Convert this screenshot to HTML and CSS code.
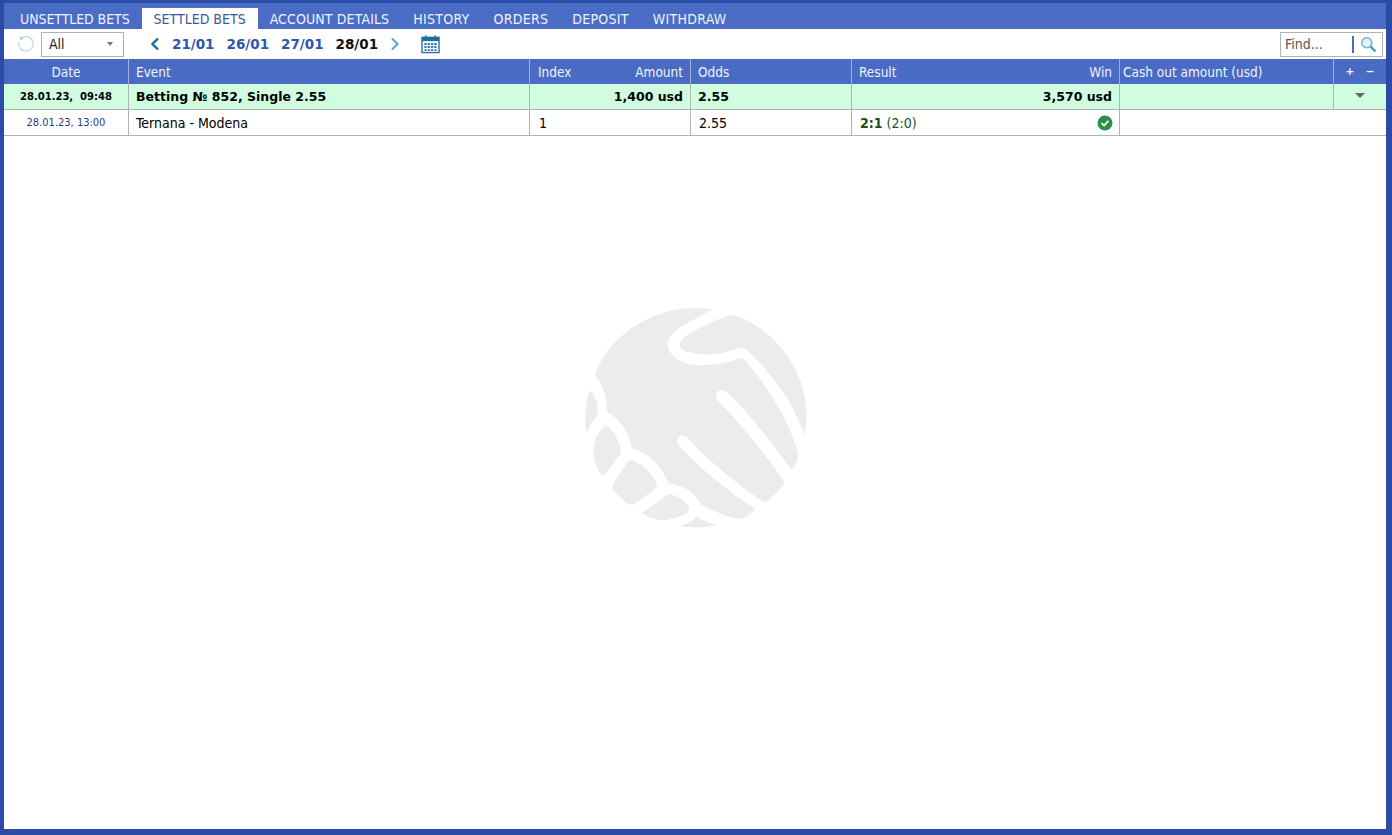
FILE: index.html
```html
<!DOCTYPE html>
<html lang="en">
<head>
<meta charset="utf-8">
<title>Settled bets</title>
<link rel="stylesheet" href="styles.css">
</head>
<body>
<div class="frame">
  <nav class="tabs">
    <a class="tab first">UNSETTLED BETS</a>
    <a class="tab active">SETTLED BETS</a>
    <a class="tab mid">ACCOUNT DETAILS</a>
    <a class="tab wide">HISTORY</a>
    <a class="tab wide">ORDERS</a>
    <a class="tab wide">DEPOSIT</a>
    <a class="tab wide">WITHDRAW</a>
  </nav>
  <div class="toolbar">
    <svg class="refresh" width="18" height="18" viewBox="0 0 18 18"><path d="M5.600 2.300A7.300 7.300 0 1 1 1.900 6.800" fill="none" stroke="#bcd9e8" stroke-width="1.300"/><path d="M2.400 1.600 6.800 2.200 3.800 5.800Z" fill="#a9cfe2"/></svg>
    <div class="select"><span>All</span><i class="caret"></i></div>
    <div class="dates">
      <svg class="chev" width="10" height="14" viewBox="0 0 10 14"><path d="M8 1.500 2.500 7 8 12.500" fill="none" stroke="#0f6d9e" stroke-width="2.400"/></svg>
      <a class="date">21/01</a>
      <a class="date">26/01</a>
      <a class="date">27/01</a>
      <a class="date current">28/01</a>
      <svg class="chev" width="10" height="14" viewBox="0 0 10 14"><path d="M2 1.500 7.500 7 2 12.500" fill="none" stroke="#62a8d0" stroke-width="2.200"/></svg>
    </div>
    <svg class="cal" width="19" height="20" viewBox="0 0 20 20"><rect x="1" y="3" width="18" height="16" fill="#fff" stroke="#1e6f9e" stroke-width="1.400"/><rect x="1" y="3" width="18" height="4" fill="#1e6f9e"/><path d="M5 1v4M15 1v4" stroke="#1e6f9e" stroke-width="1.800"/><path d="M3.500 9h2.400v2H3.500zM7 9h2.400v2H7zM10.500 9h2.400v2h-2.400zM14 9h2.400v2H14zM3.500 12.200h2.400v2H3.500zM7 12.200h2.400v2H7zM10.500 12.200h2.400v2h-2.400zM14 12.200h2.400v2H14zM3.500 15.400h2.400v2H3.500zM7 15.400h2.400v2H7zM10.500 15.400h2.400v2h-2.400zM14 15.400h2.400v2H14z" fill="#2b7fb2"/></svg>
    <div class="find">
      <span class="find-text">Find...</span>
      <i class="find-bar"></i>
      <svg width="17" height="17" viewBox="0 0 17 17"><circle cx="6.800" cy="6.800" r="5" fill="#e4f2f9" stroke="#6fb0d2" stroke-width="1.500"/><path d="M10.500 10.500 15.500 15.500" stroke="#4f97bf" stroke-width="2.400"/></svg>
    </div>
  </div>
  <div class="row head">
    <div class="cell center">Date</div>
    <div class="cell pad7">Event</div>
    <div class="cell split"><span>Index</span><span>Amount</span></div>
    <div class="cell pad7">Odds</div>
    <div class="cell split tight"><span>Result</span><span>Win</span></div>
    <div class="cell pad3">Cash out amount (usd)</div>
    <div class="cell tools"><b>+</b><b>−</b></div>
  </div>
  <div class="row bet">
    <div class="cell center stamp">28.01.23,&nbsp; 09:48</div>
    <div class="cell pad7">Betting № 852, Single 2.55</div>
    <div class="cell end">1,400 usd</div>
    <div class="cell pad7">2.55</div>
    <div class="cell end">3,570 usd</div>
    <div class="cell"></div>
    <div class="cell center"><i class="down"></i></div>
  </div>
  <div class="row item">
    <div class="cell center when">28.01.23, 13:00</div>
    <div class="cell pad7">Ternana - Modena</div>
    <div class="cell pad9">1</div>
    <div class="cell pad8">2.55</div>
    <div class="cell split result">
      <span class="score"><b>2:1</b> (2:0)</span>
      <svg width="16" height="16" viewBox="0 0 16 16"><circle cx="8" cy="8" r="7.500" fill="#2c9148"/><path d="M4.500 8.200 7 10.600 11.500 5.800" fill="none" stroke="#fff" stroke-width="1.700"/></svg>
    </div>
    <div class="cell last"></div>
  </div>
  <div class="watermark">
    <svg width="250" height="248" viewBox="0 -9 750 744">
      <g fill="#ececec">
        <path d="M428 43C400 37 340 36 290 50C190 78 105 150 75 240C95 265 108 290 112 352C150 372 175 410 186 460C240 475 275 515 295 565C345 572 375 595 395 630C430 650 480 668 510 672C525 668 545 655 555 642C480 590 400 530 345 470C330 455 318 445 322 432C328 418 345 418 355 430C380 465 500 570 580 620C588 622 595 618 600 612C615 598 630 585 640 570C645 560 640 555 635 548C580 470 510 385 445 318C435 305 438 290 450 286C462 283 472 292 480 300C550 370 610 450 665 525C675 515 685 495 684 475C660 380 590 270 525 195C518 188 512 188 505 191C470 205 420 212 380 210C340 208 305 190 294 158C288 130 310 108 340 92C370 75 400 58 428 43Z"/>
        <path d="M490 60C470 60 430 80 390 98C365 110 340 125 331 142C326 155 335 165 350 170C400 185 460 178 505 160C515 155 522 157 530 165C600 230 670 320 703 420C710 390 712 350 705 310C685 190 590 90 490 60Z"/>
        <path d="M60 285C75 300 85 325 83 360C70 375 58 395 50 415C42 375 45 320 60 285Z"/>
        <path d="M108 390C130 405 150 440 153 470C153 476 148 482 143 488L107 535C100 543 95 541 90 534C70 505 64 460 78 430C86 413 97 398 108 390Z"/>
        <path d="M180 495C215 503 250 535 262 570C262 576 257 580 252 584L195 626C185 632 175 628 167 622C155 610 140 598 130 585C125 577 127 570 132 563L170 505C173 499 176 496 180 495Z"/>
        <path d="M295 597C320 600 350 618 358 640C358 648 352 654 345 658C320 668 295 675 280 676C255 675 230 665 215 655Z"/>
        <path d="M380 663C395 675 420 685 442 690C410 698 370 699 330 694C350 688 368 678 380 663Z"/>
      </g>
    </svg>
  </div>
</div>
</body>
</html>
```
FILE: styles.css
```css
* { box-sizing: border-box; }
html, body { height: 100%; margin: 0; }
body {
  background: #2b4ba6;
  padding: 3px 6px 6px 4px;
  font-family: "DejaVu Sans", Verdana, sans-serif;
  font-stretch: condensed;
  font-size: 14px;
  color: #000;
  overflow: hidden;
}
.frame {
  position: relative;
  height: 100%;
  background: #fff;
  display: flex;
  flex-direction: column;
}
.tabs {
  height: 26px;
  flex: none;
  background: #4a6cc5;
  padding: 5px 0 0 4px;
  display: flex;
  gap: 0;
}
.tab {
  color: #eef3ff;
  padding: 0 12px;
  line-height: 22px;
  font-size: 14px;
  white-space: nowrap;
}
.first { letter-spacing: -.08px; }
.mid { letter-spacing: .12px; }
.wide { letter-spacing: .28px; }
.active { background: #fff; color: #3c5a9a; }
.toolbar {
  height: 30px;
  flex: none;
  display: flex;
  align-items: center;
  position: relative;
  z-index: 1;
  padding: 0 3px 0 13px;
}
.refresh { margin-right: 6px; }
.select {
  width: 83px;
  height: 25px;
  border: 1px solid #aeb4b4;
  display: flex;
  align-items: center;
  justify-content: space-between;
  padding: 0 10px 0 7px;
  color: #222;
}
.caret {
  width: 0;
  height: 0;
  border: 3px solid transparent;
  border-top: 4px solid #777;
  border-bottom: 0;
}
.dates {
  display: flex;
  align-items: center;
  gap: 12px;
  margin-left: 26px;
}
.date {
  font-family: "DejaVu Sans", sans-serif;
  font-stretch: normal;
  font-weight: 700;
  font-size: 13.5px;
  color: #2f55b0;
}
.current { color: #111; }
.cal { margin-left: 21px; }
.find {
  margin-left: auto;
  width: 103px;
  height: 25px;
  border: 1px solid #aeb4b4;
  display: flex;
  align-items: center;
  padding: 0 5px 0 4px;
  color: #555;
}
.find-text { flex: 1; }
.find-bar { width: 2px; height: 17px; background: #4a6cc5; margin-right: 6px; }
.row {
  display: grid;
  grid-template-columns: 125px 401px 161px 161px 268px 214px 1fr;
  flex: none;
  position: relative;
  z-index: 1;
}
.cell {
  border-right: 1px solid #aeb4b4;
  display: flex;
  align-items: center;
  min-width: 0;
  white-space: nowrap;
}
.cell:last-child { border-right: 0; }
.head { height: 25px; background: #4a6bc4; color: #eef3ff; font-size: 13.500px; }
.head .cell { border-right-color: #9fb1dc; }
.bet {
  height: 26px;
  background: #d0fddf;
  border-bottom: 1px solid #aeb4b4;
  font-family: "DejaVu Sans", sans-serif;
  font-stretch: normal;
  font-weight: 700;
  font-size: 12.500px;
}
.item { height: 26px; border-bottom: 1px solid #aeb4b4; }
.center { justify-content: center; }
.pad7 { padding-left: 7px; }
.pad8 { padding-left: 8px; }
.pad9 { padding-left: 9px; }
.pad3 { padding-left: 3px; }
.split { justify-content: space-between; padding: 0 7px 0 8px; }
.tight { padding-left: 7px; }
.end { justify-content: flex-end; padding-right: 7px; }
.result { padding-right: 6px; }
.bet .stamp { font-size: 10px; }
.when { font-size: 11px; color: #1f3d85; }
.score { color: #1c4f1c; }
.tools {
  justify-content: center;
  gap: 11px;
  font-family: "DejaVu Sans", sans-serif;
  font-stretch: normal;
  font-size: 11px;
}
.down {
  width: 0;
  height: 0;
  border: 5px solid transparent;
  border-top: 5px solid #666;
  border-bottom: 0;
  margin-bottom: 2px;
}
.last { border-right: 0; }
.watermark {
  position: absolute;
  inset: 0;
  display: flex;
  align-items: center;
  justify-content: center;
}
```
